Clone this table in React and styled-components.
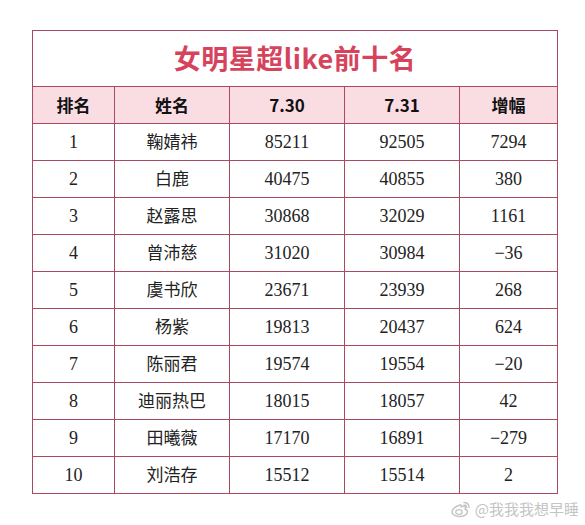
import React from "react";
import styled, { createGlobalStyle } from "styled-components";

const GlobalStyle = createGlobalStyle`
  html, body {
    margin: 0;
    padding: 0;
    background: #ffffff;
  }
`;

const Page = styled.div`
  position: relative;
  width: 585px;
  height: 525px;
  padding: 30px 0 0 32px;
  box-sizing: border-box;
  background: #fff;
`;

const Table = styled.table`
  border-collapse: collapse;
  table-layout: fixed;
  width: 525px;
  border: 1px solid #a94a62;
`;

const TitleCell = styled.td`
  box-sizing: border-box;
  height: 56px;
  padding: 0 0 2px;
  text-align: center;
  vertical-align: middle;
  border: 1px solid #a94a62;
  color: #d6435c;
  font-family: "Noto Sans CJK SC", "Noto Sans", sans-serif;
  font-weight: 700;
  font-size: 27px;
  letter-spacing: 0.5px;
  line-height: 1;
`;

const HeadCell = styled.th`
  box-sizing: border-box;
  height: 37px;
  padding: 0 0 2px;
  text-align: center;
  background: #fadde3;
  border: 1px solid #a94a62;
  color: #111;
  font-family: "Noto Sans CJK SC", "Noto Sans", sans-serif;
  font-weight: 700;
  font-size: 17px;
  line-height: 1;
`;

const Cell = styled.td`
  box-sizing: border-box;
  height: 37px;
  padding: 0 0 ${(p) => (p.$cjk ? "3px" : "0")};
  text-align: center;
  border: 1px solid #a94a62;
  color: #222;
  font-family: ${(p) =>
    p.$cjk
      ? `"Noto Sans CJK SC", sans-serif`
      : `"Liberation Serif", "DejaVu Serif", serif`};
  font-weight: 400;
  font-size: ${(p) => (p.$cjk ? "17px" : "18px")};
  line-height: 1;
`;

const Watermark = styled.div`
  position: absolute;
  right: 6px;
  bottom: 6px;
  display: flex;
  align-items: center;
  gap: 3px;
  color: #c4c4c4;
  font-family: "Noto Sans CJK SC", sans-serif;
  font-size: 15px;
  text-shadow: 0 0 1px #fff, 0 0 2px #fff;
`;

const rows = [
  [1, "鞠婧祎", 85211, 92505, "7294"],
  [2, "白鹿", 40475, 40855, "380"],
  [3, "赵露思", 30868, 32029, "1161"],
  [4, "曾沛慈", 31020, 30984, "−36"],
  [5, "虞书欣", 23671, 23939, "268"],
  [6, "杨紫", 19813, 20437, "624"],
  [7, "陈丽君", 19574, 19554, "−20"],
  [8, "迪丽热巴", 18015, 18057, "42"],
  [9, "田曦薇", 17170, 16891, "−279"],
  [10, "刘浩存", 15512, 15514, "2"],
];

const WeiboLogo = () => (
  <svg width="22" height="18" viewBox="0 0 22 18">
    <path
      d="M9 5.5c-4 1-7 4-7 6.5 0 2.5 3.2 4.5 7.5 4.5 4.6 0 8-2.3 8-4.8 0-1.6-1.5-2.3-2.4-2.5.6-1.3.5-2.4-.6-2.8-1.2-.4-3.2.4-3.2.4s.4-1.5-.6-1.9C10 4.6 9 5.5 9 5.5z"
      fill="none"
      stroke="#c4c4c4"
      strokeWidth="1.5"
    />
    <ellipse cx="9" cy="12" rx="3.2" ry="2.4" fill="none" stroke="#c4c4c4" strokeWidth="1.3" />
    <path d="M14 2.5c3 0 5 2 5 5M14 5c1.6 0 2.6 1 2.6 2.6" fill="none" stroke="#c4c4c4" strokeWidth="1.4" strokeLinecap="round" />
  </svg>
);

const App = () => (
  <Page>
    <GlobalStyle />
    <Table>
      <colgroup>
        <col style={{ width: 82 }} />
        <col style={{ width: 115 }} />
        <col style={{ width: 115 }} />
        <col style={{ width: 115 }} />
        <col style={{ width: 98 }} />
      </colgroup>
      <tbody>
        <tr>
          <TitleCell colSpan={5}>女明星超like前十名</TitleCell>
        </tr>
        <tr>
          <HeadCell>排名</HeadCell>
          <HeadCell>姓名</HeadCell>
          <HeadCell>7.30</HeadCell>
          <HeadCell>7.31</HeadCell>
          <HeadCell>增幅</HeadCell>
        </tr>
        {rows.map(([rank, name, a, b, diff]) => (
          <tr key={rank}>
            <Cell>{rank}</Cell>
            <Cell $cjk>{name}</Cell>
            <Cell>{a}</Cell>
            <Cell>{b}</Cell>
            <Cell>{diff}</Cell>
          </tr>
        ))}
      </tbody>
    </Table>
    <Watermark>
      <WeiboLogo />
      <span>@我我我想早睡</span>
    </Watermark>
  </Page>
);

export default App;
